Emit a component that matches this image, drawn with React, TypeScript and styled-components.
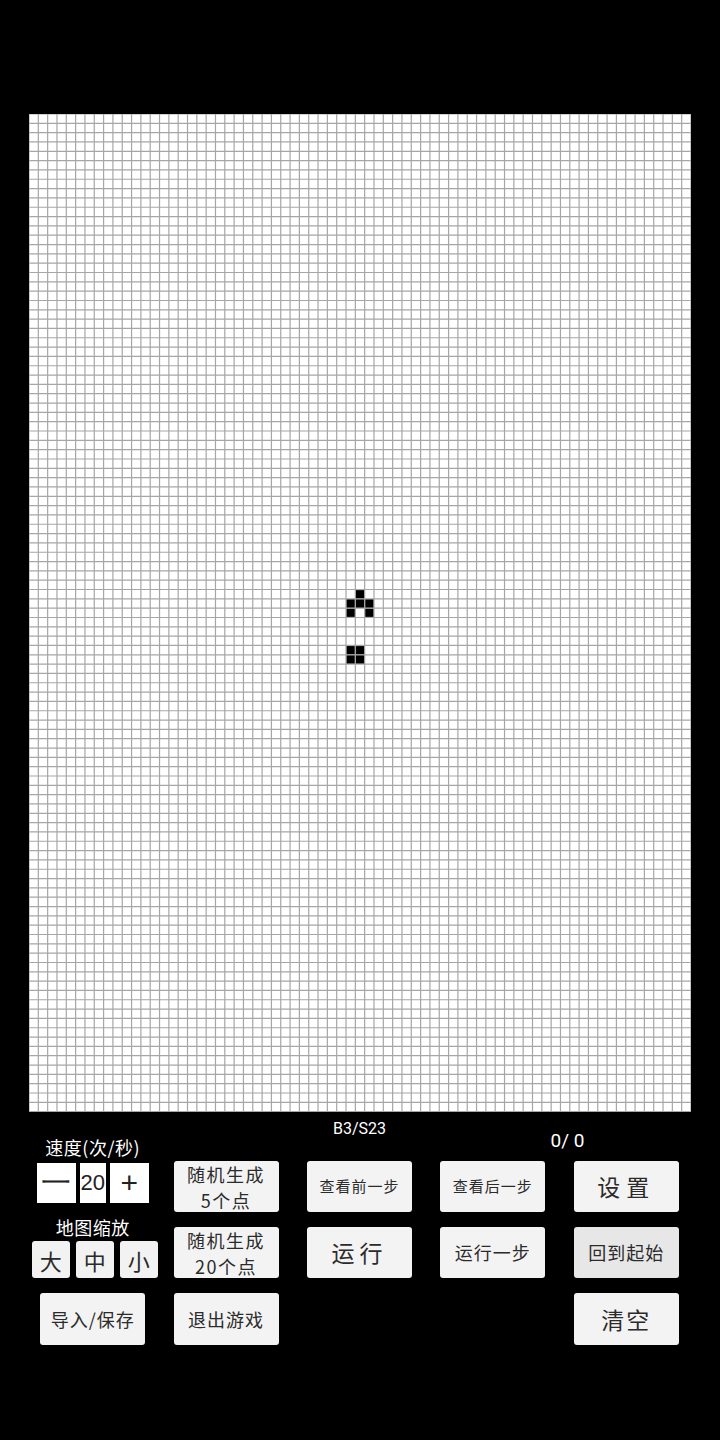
import React from 'react';
import styled, { createGlobalStyle } from 'styled-components';

const GlobalStyle = createGlobalStyle`
  html, body {
    margin: 0;
    padding: 0;
    background: #000;
  }
  body {
    font-family: "Noto Sans CJK SC", "Noto Sans", sans-serif;
  }
`;

const COLS = 71;
const ROWS = 107;
const BOARD_W = 662;
const CELL = BOARD_W / COLS;
const BOARD_H = Math.round(CELL * ROWS);

// live cells: [col, row]
const liveCells: [number, number][] = [
  [35, 51],
  [34, 52],
  [35, 52],
  [36, 52],
  [34, 53],
  [36, 53],
  [34, 57],
  [35, 57],
  [34, 58],
  [35, 58],
];

const Page = styled.div`
  width: 720px;
  min-height: 1440px;
  background: #000;
  overflow: hidden;
`;

const BoardWrap = styled.div`
  padding: 114px 0 0 29px;
  line-height: 0;
`;

const Panel = styled.div`
  display: grid;
  grid-template-columns: repeat(5, 133.4px);
  grid-template-rows: 34px 51px 51px 52px;
  row-gap: 15px;
  padding-left: 26px;
`;

const SpeedGroup = styled.div`
  grid-column: 1;
  grid-row: 1 / span 3;
  display: flex;
  flex-direction: column;
  align-items: center;
  padding-top: 24px;
`;

const Label = styled.div<{ $top: number }>`
  margin-top: ${(p) => p.$top}px;
  color: #fff;
  font-size: 18px;
  line-height: 22px;
  letter-spacing: 0.5px;
  white-space: nowrap;
`;

const SpeedRow = styled.div`
  display: flex;
  gap: 4px;
  margin-top: 5px;
`;

const SpeedBox = styled.div<{ $w: number }>`
  width: ${(p) => p.$w}px;
  height: 40px;
  background: #fff;
  color: #222;
  display: flex;
  align-items: center;
  justify-content: center;
  font-family: "Liberation Sans", Roboto, sans-serif;
  font-size: ${(p) => (p.$w < 30 ? 22 : 30)}px;
  font-weight: 300;
`;

const ZoomRow = styled.div`
  display: flex;
  gap: 6px;
  margin-top: 3px;
  margin-left: 4px;
`;

const ZoomButton = styled.div`
  width: 38px;
  height: 37px;
  background: #f2f2f2;
  border-radius: 3px;
  color: #2a2a2a;
  display: flex;
  align-items: center;
  justify-content: center;
  font-size: 22px;
`;

const Header = styled.div<{ $col: string; $top: number; $size: number; $shift?: number }>`
  grid-column: ${(p) => p.$col};
  grid-row: 1;
  padding-top: ${(p) => p.$top}px;
  padding-left: ${(p) => p.$shift ?? 0}px;
  color: #fff;
  text-align: center;
  font-family: Roboto, "Liberation Sans", sans-serif;
  font-size: ${(p) => p.$size}px;
  line-height: 1.15;
`;

const Button = styled.div<{ $col: number; $row: number; $size: number; $spacing?: number; $pressed?: boolean }>`
  grid-column: ${(p) => p.$col};
  grid-row: ${(p) => p.$row};
  justify-self: center;
  width: 105px;
  height: 100%;
  box-sizing: border-box;
  background: ${(p) => (p.$pressed ? '#e7e7e7' : '#f3f3f3')};
  border-radius: 3px;
  color: #2b2b2b;
  display: flex;
  flex-direction: column;
  align-items: center;
  justify-content: center;
  text-align: center;
  font-size: ${(p) => p.$size}px;
  line-height: 1.25;
  letter-spacing: ${(p) => p.$spacing ?? 0}px;
  white-space: nowrap;
`;

const ButtonLine = styled.div`
  height: 26px;
  line-height: 26px;
  font-size: 18px;
  letter-spacing: 1.5px;
`;

const Board: React.FC = () => {
  const vLines = Array.from({ length: COLS + 1 }, (_, i) => i * CELL);
  const hLines = Array.from({ length: ROWS + 1 }, (_, i) => i * CELL);
  return (
    <svg width={BOARD_W} height={BOARD_H} viewBox={`0 0 ${BOARD_W} ${BOARD_H}`}>
      <rect x={0} y={0} width={BOARD_W} height={BOARD_H} fill="#fff" />
      <g stroke="#a6a6a6" strokeWidth={1.2}>
        {vLines.map((x, i) => (
          <line key={`v${i}`} x1={x} y1={0} x2={x} y2={BOARD_H} />
        ))}
        {hLines.map((y, i) => (
          <line key={`h${i}`} x1={0} y1={y} x2={BOARD_W} y2={y} />
        ))}
      </g>
      {liveCells.map(([c, r]) => (
        <rect
          key={`${c}-${r}`}
          x={c * CELL + 0.6}
          y={r * CELL + 0.6}
          width={CELL - 1.2}
          height={CELL - 1.2}
          fill="#000"
        />
      ))}
    </svg>
  );
};

export default function App() {
  return (
    <Page>
      <GlobalStyle />
      <BoardWrap>
        <Board />
      </BoardWrap>
      <Panel>
        <SpeedGroup>
          <Label $top={0}>速度(次/秒)</Label>
          <SpeedRow>
            <SpeedBox $w={39}>一</SpeedBox>
            <SpeedBox $w={26}>20</SpeedBox>
            <SpeedBox $w={39}>+</SpeedBox>
          </SpeedRow>
          <Label $top={13}>地图缩放</Label>
          <ZoomRow>
            <ZoomButton>大</ZoomButton>
            <ZoomButton>中</ZoomButton>
            <ZoomButton>小</ZoomButton>
          </ZoomRow>
        </SpeedGroup>

        <Header $col="3" $top={8} $size={16}>B3/S23</Header>
        <Header $col="4 / span 2" $top={18} $size={19} $shift={16}>0/ 0</Header>

        <Button $col={2} $row={2} $size={20}>
          <ButtonLine>随机生成</ButtonLine>
          <ButtonLine>5个点</ButtonLine>
        </Button>
        <Button $col={3} $row={2} $size={15} $spacing={1}>查看前一步</Button>
        <Button $col={4} $row={2} $size={15} $spacing={1}>查看后一步</Button>
        <Button $col={5} $row={2} $size={23} $spacing={6}>设置</Button>

        <Button $col={2} $row={3} $size={20}>
          <ButtonLine>随机生成</ButtonLine>
          <ButtonLine>20个点</ButtonLine>
        </Button>
        <Button $col={3} $row={3} $size={23} $spacing={5}>运行</Button>
        <Button $col={4} $row={3} $size={18} $spacing={1}>运行一步</Button>
        <Button $col={5} $row={3} $size={18} $spacing={1} $pressed>回到起始</Button>

        <Button $col={1} $row={4} $size={18} $spacing={1}>导入/保存</Button>
        <Button $col={2} $row={4} $size={18} $spacing={1}>退出游戏</Button>
        <Button $col={5} $row={4} $size={23} $spacing={2}>清空</Button>
      </Panel>
    </Page>
  );
}
